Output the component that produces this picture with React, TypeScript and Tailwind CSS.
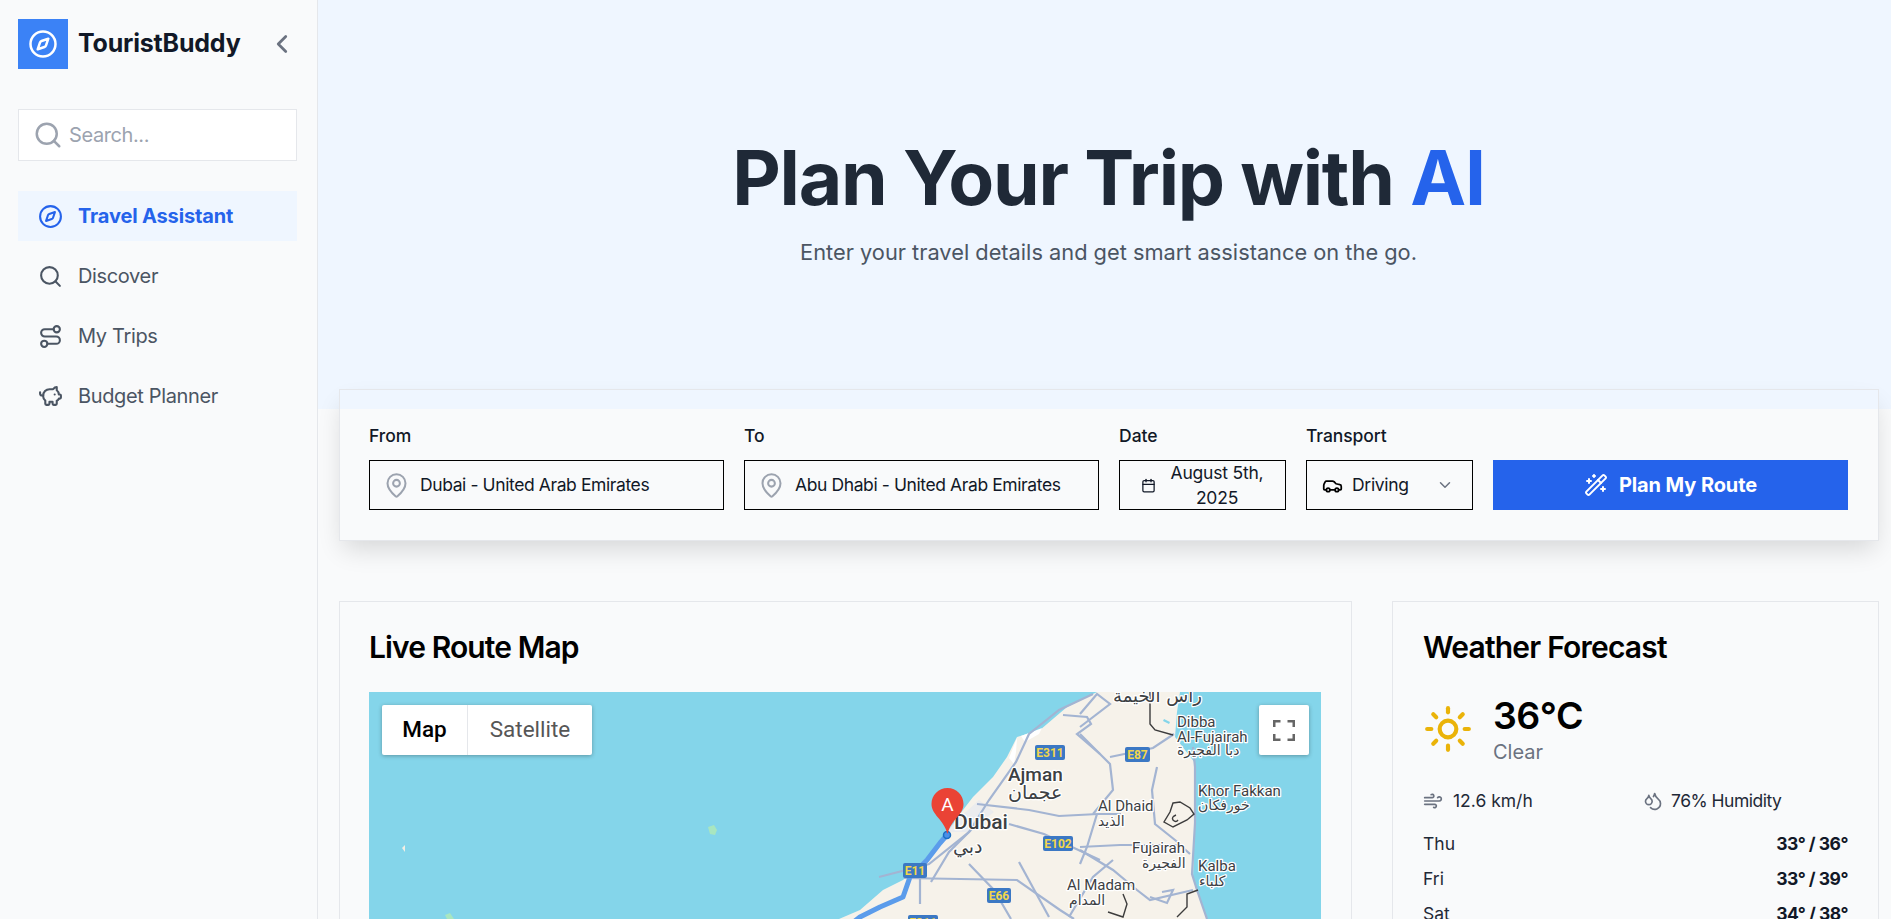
import { ChevronLeft, ChevronDown, Calendar, Car, Compass, Droplets, MapPin, PiggyBank, Route, Search, Sun, Wand2, Wind } from 'lucide-react';

const navItems = [
  { label: 'Travel Assistant', icon: Compass, active: true },
  { label: 'Discover', icon: Search, active: false },
  { label: 'My Trips', icon: Route, active: false },
  { label: 'Budget Planner', icon: PiggyBank, active: false },
];

const forecast = [
  { day: 'Thu', temp: '33° / 36°' },
  { day: 'Fri', temp: '33° / 39°' },
  { day: 'Sat', temp: '34° / 38°' },
];

const shields = [
  { x: 666, y: 53, w: 30, t: 'E311' },
  { x: 756, y: 55, w: 25, t: 'E87' },
  { x: 674, y: 144, w: 30, t: 'E102' },
  { x: 534, y: 171, w: 24, t: 'E11' },
  { x: 618, y: 196, w: 24, t: 'E66' },
  { x: 539, y: 223, w: 30, t: 'E311' },
];

const roads = [
  'M724 2 L690 18 L660 42 L647 70 L620 108 L600 140 L560 172 L510 185',
  'M608 112 L660 118 L690 124 L729 122 L752 122',
  'M640 132 L675 142 L731 168',
  'M600 172 L625 198 L642 227',
  'M535 186 L648 188 L691 218 L705 227',
  'M551 186 L551 212',
  'M694 23 L718 25 L722 32 L708 42 L731 62',
  'M711 22 L728 2 L741 12 L711 35',
  'M711 42 L731 62 L741 72 L744 98 L724 122',
  'M741 65 L784 56 L805 42',
  'M788 75 L783 98 L786 132 L811 152',
  'M711 155 L751 153 L811 153 L821 162',
  'M728 122 L718 155 L711 172',
  'M711 158 L744 178 L768 198 L781 208 L824 198',
  'M824 55 L826 75 L826 131 L823 182 L828 198 L838 227',
  'M744 168 L724 185 L700 225',
  'M793 200 L804 198 L798 211 L781 205',
  'M610 130 L580 160 L562 190',
  'M650 170 L680 225',
];

const Sidebar = () => (
  <aside className="w-[318px] shrink-0 border-r border-[#e5e7eb] bg-[#f9fafb] pl-[18px] pr-[20px]">
    <div className="flex h-[88px] items-center">
      <div className="flex h-[50px] w-[50px] items-center justify-center bg-[#3b82f6] text-white">
        <Compass size={30} strokeWidth={2} />
      </div>
      <span className="ml-[10px] text-[25px] font-bold tracking-[-0.2px] text-[#111827]">TouristBuddy</span>
      <ChevronLeft size={30} className="ml-auto text-[#6b7280]" strokeWidth={2.2} />
    </div>
    <div className="mt-[21px] flex h-[52px] items-center border border-[#e5e7eb] bg-white pl-[14px]">
      <Search size={30} strokeWidth={2} className="text-[#9ca3af]" />
      <span className="ml-[6px] text-[20px] tracking-[-0.4px] text-[#9ca3af]">Search...</span>
    </div>
    <nav className="mt-[30px] flex flex-col gap-[10px]">
      {navItems.map((item) => (
        <div
          key={item.label}
          className={`flex h-[50px] items-center pl-[20px] text-[20px] ${item.active ? 'bg-[#eff6ff] font-bold tracking-[-0.15px] text-[#2563eb]' : 'tracking-[-0.35px] text-[#4b5563]'}`}
        >
          <item.icon size={25} strokeWidth={2} />
          <span className="ml-[15px]">{item.label}</span>
        </div>
      ))}
    </nav>
  </aside>
);

const Field = ({ label, value }: { label: string; value: string }) => (
  <div>
    <div className="mb-[14px] text-[17.5px] font-medium leading-[21px] text-[#111827]">{label}</div>
    <div className="flex h-[50px] items-center border border-black pl-[13px] text-[17.5px] tracking-[-0.4px] text-[#111827]">
      <MapPin size={27} className="text-[#9ca3af]" strokeWidth={1.8} />
      <span className="ml-[10px] pt-[1px]">{value}</span>
    </div>
  </div>
);

const RouteMap = () => (
  <svg viewBox="0 0 952 227" className="h-full w-full bg-[#84d5ea]" fontFamily="Roboto, 'DejaVu Sans', sans-serif">
    {/* islands */}
    <path d="M339 135l6-2 3 5-2 5-5-1z" fill="#a8e6c0" />
    <path d="M33 156l3-3v7z" fill="#f3efe4" />
    <path d="M76 223l5-2 4 6h-7z" fill="#a8e6c0" />
    {/* land */}
    <path
      d="M728 0 L698 15 L671 38 L648 45 L638 65 L624 85 L604 105 L594 118 L578 141 L558 165 L534 188 L514 198 L491 218 L470 227 L838 227 L828 198 L824 185 L826 131 L826 71 L806 45 L808 20 L811 0 Z"
      fill="#f6f2ea"
    />
    {/* lagoons */}
    <path d="M652 44 L673 36 L670 42 L656 50Z" fill="#ffffff" />
    <path d="M640 66 L648 46 L647 60 L645 72Z" fill="#ffffff" />
    <path d="M575 140 L610 108 L625 120 L600 140Z" fill="#e4e8f0" fillOpacity="0.6" />
    <path d="M795 27l6 3-1 2-6-3z" fill="#84d5ea" />
    {/* roads */}
    <g fill="none" stroke="#a3b4d2" strokeWidth="2.2">
      {roads.map((d) => (
        <path key={d} d={d} />
      ))}
    </g>
    {/* borders */}
    <g fill="none" stroke="#3c3c3c" strokeWidth="1.4">
      <path d="M781 0 L781 32 L786 38 L804 43" />
      <path d="M804 111 L811 110 L821 116 L825 122 L818 128 L804 135 L795 130 L801 120Z" />
      <path d="M807 123 q-5 2 -3 5 q3 3 5 0" />
      <path d="M829 198 L818 202 L818 215 L808 225" />
      <path d="M754 202 L758 212 L754 225 L739 220" />
    </g>
    {/* route */}
    <path
      d="M578 143 L571 151 L558 168 L541 185 L534 205 L511 215 L491 225 L482 232"
      fill="none"
      stroke="#5b9ceb"
      strokeWidth="5"
      strokeLinejoin="round"
    />
    {/* shields */}
    {shields.map((s) => (
      <g key={s.t + s.y} transform={`translate(${s.x} ${s.y})`}>
        <rect width={s.w} height="15" rx="2" fill="#3b78c4" />
        <text x={s.w / 2} y="12" fontSize="12" fontWeight="700" textAnchor="middle" fill="#f2d64b">{s.t}</text>
      </g>
    ))}
    {/* labels */}
    <g fill="#3c4043" stroke="#ffffff" strokeWidth="2.5" paintOrder="stroke" strokeLinejoin="round">
      <text x="744" y="10" fontSize="18" fontFamily="'DejaVu Sans', sans-serif">رأس الخيمة</text>
      <text x="808" y="35" fontSize="15">Dibba</text>
      <text x="808" y="50" fontSize="15">Al-Fujairah</text>
      <text x="808" y="63" fontSize="14" fontFamily="'DejaVu Sans', sans-serif">دبا الفجيرة</text>
      <text x="639" y="89" fontSize="19" fontWeight="500">Ajman</text>
      <text x="639" y="107" fontSize="19" fontFamily="'DejaVu Sans', sans-serif">عجمان</text>
      <text x="829" y="104" fontSize="15">Khor Fakkan</text>
      <text x="829" y="118" fontSize="14" fontFamily="'DejaVu Sans', sans-serif">خورفكان</text>
      <text x="729" y="119" fontSize="15">Al Dhaid</text>
      <text x="729" y="134" fontSize="14" fontFamily="'DejaVu Sans', sans-serif">الذيد</text>
      <text x="585" y="137" fontSize="21" fontWeight="500">Dubai</text>
      <text x="584" y="161" fontSize="19" fontFamily="'DejaVu Sans', sans-serif">دبي</text>
      <text x="763" y="161" fontSize="15">Fujairah</text>
      <text x="773" y="176" fontSize="14" fontFamily="'DejaVu Sans', sans-serif">الفجيرة</text>
      <text x="829" y="179" fontSize="15">Kalba</text>
      <text x="830" y="194" fontSize="14" fontFamily="'DejaVu Sans', sans-serif">كلباء</text>
      <text x="698" y="198" fontSize="15">Al Madam</text>
      <text x="700" y="213" fontSize="14" fontFamily="'DejaVu Sans', sans-serif">المدام</text>
    </g>
    {/* pin */}
    <circle cx="578" cy="143" r="3.5" fill="#4a90e8" stroke="#1a6fc4" strokeWidth="1.5" />
    <path d="M578.5 96c-9 0-16 7-16 16 0 11 12 15 16 30 4-15 16-19 16-30 0-9-7-16-16-16z" fill="#ea4335" />
    <text x="578.5" y="119" fontSize="19" textAnchor="middle" fill="#ffffff">A</text>
  </svg>
);

export default function App() {
  return (
    <div className="flex h-screen overflow-hidden bg-[#f9fafb] font-['Inter',sans-serif]">
      <Sidebar />
      <main className="min-w-0 flex-1">
        <section className="flex h-[409px] flex-col items-center bg-[#eff6ff] pl-[8px] pt-[131px]">
          <h1 className="text-[75px] font-bold leading-[94px] tracking-[-1.25px] text-[#1f2937]">
            Plan Your Trip with <span className="text-[#2563eb]">AI</span>
          </h1>
          <p className="mt-[11px] text-[21.8px] text-[#4b5563]">Enter your travel details and get smart assistance on the go.</p>
        </section>
        <div className="pl-[21px] pr-[12px]">
          <section className="relative -mt-[20px] grid h-[152px] grid-cols-[355px_355px_167px_167px_355px] items-start gap-x-[20px] border border-[#e5e7eb] pl-[29px] pt-[35px] shadow-[0_12px_24px_-4px_rgba(0,0,0,0.14)]">
            <Field label="From" value="Dubai - United Arab Emirates" />
            <Field label="To" value="Abu Dhabi - United Arab Emirates" />
            <div>
              <div className="mb-[14px] text-[17.5px] font-medium leading-[21px] text-[#111827]">Date</div>
              <div className="flex h-[50px] items-center border border-black pl-[21px] pr-[16px] text-[17.5px] leading-[25px] tracking-[-0.2px] text-[#111827]">
                <Calendar size={15} strokeWidth={2} className="shrink-0" />
                <span className="ml-[9px] flex-1 text-center">August 5th, 2025</span>
              </div>
            </div>
            <div>
              <div className="mb-[14px] text-[17.5px] font-medium leading-[21px] tracking-[-0.1px] text-[#111827]">Transport</div>
              <div className="flex h-[50px] items-center border border-black pl-[15px] pr-[18px] text-[17.5px] tracking-[-0.3px] text-[#111827]">
                <Car size={21} strokeWidth={2} className="text-black" />
                <span className="ml-[9px] pt-[1px]">Driving</span>
                <ChevronDown size={18} className="ml-auto text-[#6b7280]" />
              </div>
            </div>
            <div className="mt-[35px] flex h-[50px] items-center justify-center bg-[#2563eb] text-[20px] font-bold tracking-[-0.1px] text-white">
              <Wand2 size={24} strokeWidth={2} />
              <span className="ml-[11px]">Plan My Route</span>
            </div>
          </section>
          <div className="mt-[60px] flex gap-[40px]">
            <section className="w-[1013px] border border-[#e5e7eb] pl-[29px] pr-[30px] pt-[27px]">
              <h2 className="text-[30px] font-semibold leading-[36px] tracking-[-0.9px] text-black">Live Route Map</h2>
              <div className="relative mt-[27px] h-[227px] overflow-hidden">
                <RouteMap />
                <div className="absolute left-[13px] top-[13px] flex h-[50px] rounded-[2px] bg-white font-['Roboto',sans-serif] text-[22.5px] shadow-[0_1px_4px_rgba(0,0,0,0.3)]">
                  <div className="flex w-[86px] items-center justify-center border-r border-[#e5e7eb] font-medium text-black">Map</div>
                  <div className="flex w-[124px] items-center justify-center text-[#565656]">Satellite</div>
                </div>
                <div className="absolute right-[12px] top-[13px] flex h-[50px] w-[50px] items-center justify-center rounded-[2px] bg-white shadow-[0_1px_4px_rgba(0,0,0,0.3)]">
                  <svg width="22" height="21" viewBox="0 0 22 21" fill="none" stroke="#666666" strokeWidth="2.5">
                    <path d="M1.25 7V1.25H7.5M14.5 1.25H20.75V7M20.75 14V19.75H14.5M7.5 19.75H1.25V14" />
                  </svg>
                </div>
              </div>
            </section>
            <section className="min-w-0 flex-1 border border-[#e5e7eb] px-[30px] pt-[27px]">
              <h2 className="text-[30px] font-semibold leading-[36px] tracking-[-0.8px] text-black">Weather Forecast</h2>
              <div className="mt-[27px] flex items-center">
                <Sun size={50} strokeWidth={2} className="text-[#eab308]" />
                <div className="ml-[20px]">
                  <div className="text-[37.5px] font-semibold leading-[48px] tracking-[-0.5px] text-black">36°C</div>
                  <div className="text-[20px] leading-[25px] text-[#6b7280]">Clear</div>
                </div>
              </div>
              <div className="mt-[23px] grid grid-cols-[220px_1fr] text-[17.5px] text-[#1f2937]">
                <div className="flex items-center">
                  <Wind size={20} className="text-[#6b7280]" />
                  <span className="ml-[10px]">12.6 km/h</span>
                </div>
                <div className="flex items-center">
                  <Droplets size={20} className="text-[#6b7280]" />
                  <span className="ml-[8px] tracking-[-0.5px]">76% Humidity</span>
                </div>
              </div>
              <div className="mt-[17px] flex flex-col gap-[10px]">
                {forecast.map((row) => (
                  <div key={row.day} className="flex justify-between text-[17.5px] leading-[25px] text-[#1f2937]">
                    <span>{row.day}</span>
                    <span className="font-bold tracking-[-0.5px] text-[#111827]">{row.temp}</span>
                  </div>
                ))}
              </div>
            </section>
          </div>
        </div>
      </main>
    </div>
  );
}
